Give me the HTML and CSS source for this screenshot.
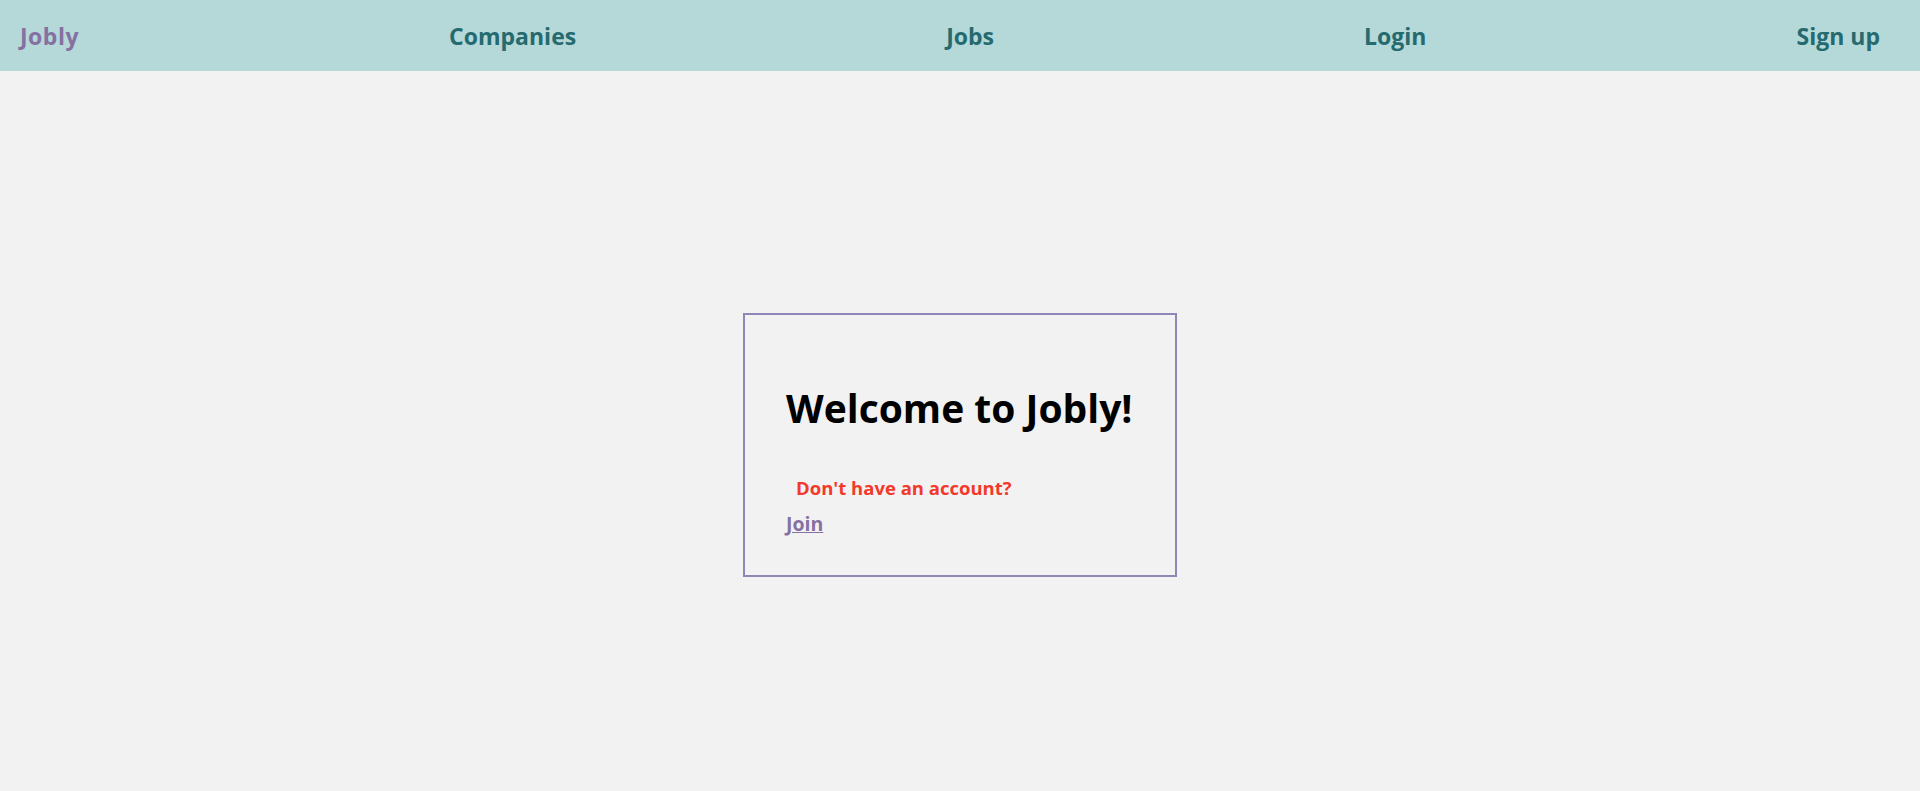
FILE: index.html
```html
<!DOCTYPE html>
<html lang="en">
<head>
<meta charset="utf-8">
<title>Jobly</title>
<link rel="stylesheet" href="styles.css">
</head>
<body>
<nav class="navbar">
  <a class="nav-brand" href="#">Jobly</a>
  <a class="nav-link" href="#">Companies</a>
  <a class="nav-link" href="#">Jobs</a>
  <a class="nav-link" href="#">Login</a>
  <a class="nav-link nav-last" href="#">Sign up</a>
</nav>
<main class="home">
  <section class="welcome-card">
    <h1 class="welcome-title">Welcome to Jobly!</h1>
    <p class="welcome-note">Don't have an account?</p>
    <a class="welcome-join" href="#">Join</a>
  </section>
</main>
</body>
</html>
```
FILE: styles.css
```css
html, body {
  margin: 0;
  padding: 0;
}
body {
  background: #f2f2f2;
  font-family: "Open Sans", "Noto Sans", sans-serif;
  min-height: 791px;
}
.navbar {
  height: 71px;
  background: #b5d8d9;
  display: flex;
  justify-content: space-between;
  align-items: center;
  padding: 2px 40px 0 20px;
  box-sizing: border-box;
}
.nav-brand, .nav-link {
  font-size: 23px;
  font-weight: 700;
  text-decoration: none;
  line-height: 1;
}
.nav-brand {
  color: #8570a2;
  letter-spacing: 0.5px;
}
.nav-link {
  color: #256a6e;
}
.home {
  display: flex;
  justify-content: center;
  padding-top: 242px;
}
.welcome-card {
  width: 434px;
  height: 264px;
  box-sizing: border-box;
  border: 2px solid #9087b6;
  padding: 70px 42px 0 41px;
}
.welcome-title {
  margin: 0;
  font-size: 39px;
  font-weight: 700;
  line-height: 46px;
  color: #000;
}
.welcome-note {
  margin: 45px 0 0 10px;
  font-size: 18.5px;
  font-weight: 700;
  line-height: 24px;
  color: #f23a2b;
}
.welcome-join {
  display: inline-block;
  margin-top: 12px;
  font-size: 19.5px;
  font-weight: 700;
  line-height: 24px;
  color: #8570a2;
}
```
